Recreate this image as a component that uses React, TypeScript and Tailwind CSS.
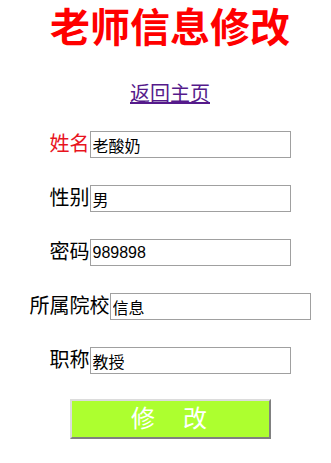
import React from 'react';

const fields = [
  { label: '姓名', value: '老酸奶', red: true },
  { label: '性别', value: '男' },
  { label: '密码', value: '989898' },
  { label: '所属院校', value: '信息' },
  { label: '职称', value: '教授' },
];

export default function App() {
  return (
    <div className="min-h-[463px] bg-white pl-[9px] font-['Liberation_Sans','Noto_Sans_CJK_SC',sans-serif]">
      <div className="flex flex-col items-center pt-[4px]">
        <h1 className="text-[40px] leading-[48px] font-bold text-[#ff0000]">老师信息修改</h1>

        <a href="#" className="mt-[28px] text-[20px] leading-[28px] text-[#551a8b] underline">
          返回主页
        </a>

        <form className="mt-[23px] flex flex-col items-center gap-[27px]" onSubmit={(e) => e.preventDefault()}>
          {fields.map((f) => (
            <div key={f.label} className="flex items-center">
              <span className={`text-[20px] leading-[27px] ${f.red ? 'text-[#e8141e]' : 'text-black'}`}>{f.label}</span>
              <input
                type="text"
                defaultValue={f.value}
                className="h-[27px] w-[201px] border border-[#a0a0a0] px-[2px] text-[16px] text-black outline-none"
              />
            </div>
          ))}

          <button
            type="submit"
            className="-mt-[2px] h-[40px] w-[201px] border-2 border-t-[#dcdcdc] border-l-[#dcdcdc] border-r-[#808080] border-b-[#808080] bg-[#adff2f] text-[24px] leading-[36px] tracking-[2px] text-white"
          >
            修　改
          </button>
        </form>
      </div>
    </div>
  );
}
